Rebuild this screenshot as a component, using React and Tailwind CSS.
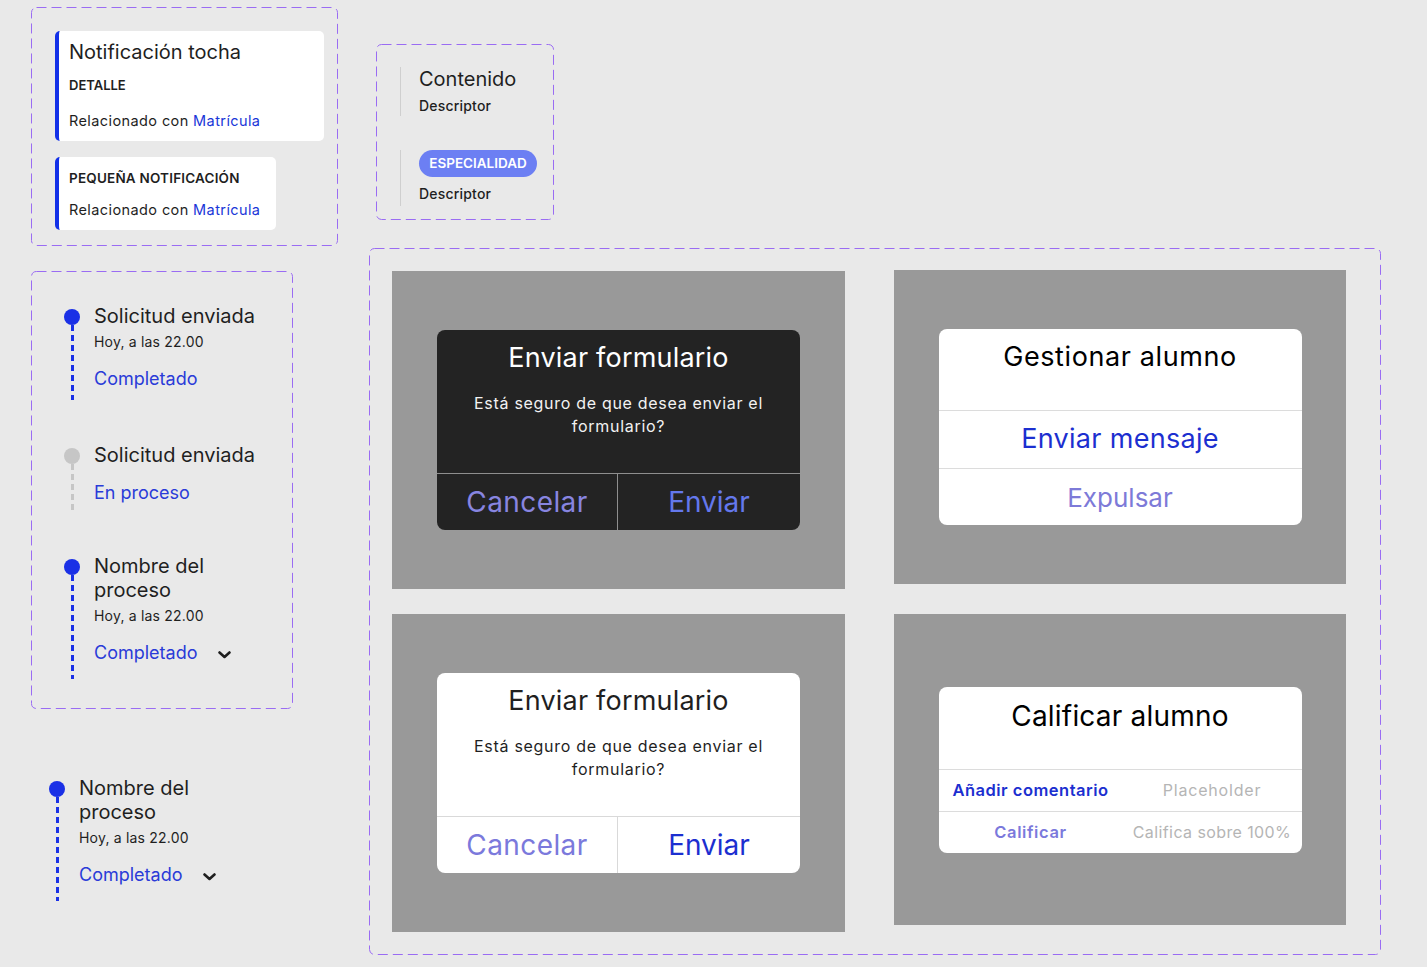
import React from "react";

function DashedBox({ className = "", children }) {
  return (
    <div className={"relative rounded-[5px] " + className}>
      <svg className="pointer-events-none absolute left-0 top-0 h-[calc(100%-1px)] w-[calc(100%-1px)] overflow-visible">
        <rect x="0.5" y="0.5" width="100%" height="100%" rx="5" fill="none" stroke="#9a6cf3" strokeWidth="1" strokeDasharray="10 5" />
      </svg>
      {children}
    </div>
  );
}

function Chevron() {
  return (
    <svg width="13" height="8" viewBox="0 0 13 8" className="ml-[21px] mt-[4px]">
      <polyline points="1.5,1.5 6.5,6 11.5,1.5" fill="none" stroke="#1f1f1f" strokeWidth="2.6" strokeLinecap="round" strokeLinejoin="round" />
    </svg>
  );
}

function BlueLine() {
  return <div className="w-[3px] flex-1 bg-[repeating-linear-gradient(to_bottom,#1a30e6_0px,#1a30e6_6px,transparent_6px,transparent_10px)]" />;
}
function GrayLine() {
  return <div className="w-[3px] flex-1 bg-[repeating-linear-gradient(to_bottom,#c6c6c6_0px,#c6c6c6_6px,transparent_6px,transparent_10px)]" />;
}

function ProcessItem({ className = "" }) {
  return (
    <div className={"flex gap-[14px] " + className}>
      <div className="flex w-[16px] flex-col items-center pt-[5px]">
        <div className="h-[16px] w-[16px] rounded-full bg-[#1a30e6]" />
        <BlueLine />
      </div>
      <div className="w-[150px] pb-[14px]">
        <div className="text-[20px] leading-[24px] text-[#1f1f1f]">Nombre del proceso</div>
        <div className="mt-[4px] text-[14px] leading-[20px] tracking-[0.2px] text-[#1f1f1f]">Hoy, a las 22.00</div>
        <div className="mt-[15px] flex items-center">
          <span className="text-[18px] leading-[24px] text-[#2a3bd8]">Completado</span>
          <Chevron />
        </div>
      </div>
    </div>
  );
}

function DarkDialog() {
  return (
    <div className="flex h-[200px] w-[363px] flex-col overflow-hidden rounded-[8px] bg-[#232323]">
      <div className="h-[143px] pt-[12px] text-center">
        <div className="text-[27px] leading-[32px] tracking-[0.2px] text-white">Enviar formulario</div>
        <div className="mt-[18px] text-[16px] leading-[23px] tracking-[0.7px] text-[#f2f2f2]">
          Está seguro de que desea enviar el<br />formulario?
        </div>
      </div>
      <div className="flex flex-1 border-t border-[#8e8e8e]">
        <div className="flex w-[181px] items-center justify-center border-r border-[#8e8e8e] text-[28px] tracking-[0.4px] text-[#8885e0]">Cancelar</div>
        <div className="flex flex-1 items-center justify-center text-[28px] text-[#6478ec]">Enviar</div>
      </div>
    </div>
  );
}

function LightDialog() {
  return (
    <div className="flex h-[200px] w-[363px] flex-col overflow-hidden rounded-[8px] bg-white">
      <div className="h-[143px] pt-[12px] text-center">
        <div className="text-[27px] leading-[32px] tracking-[0.2px] text-[#1f1f1f]">Enviar formulario</div>
        <div className="mt-[18px] text-[16px] leading-[23px] tracking-[0.7px] text-[#1f1f1f]">
          Está seguro de que desea enviar el<br />formulario?
        </div>
      </div>
      <div className="flex flex-1 border-t border-[#d9d9d9]">
        <div className="flex w-[181px] items-center justify-center border-r border-[#d9d9d9] text-[28px] tracking-[0.4px] text-[#7b79dc]">Cancelar</div>
        <div className="flex flex-1 items-center justify-center text-[28px] text-[#1c2fd0]">Enviar</div>
      </div>
    </div>
  );
}

function ManageDialog() {
  return (
    <div className="flex h-[196px] w-[363px] flex-col overflow-hidden rounded-[8px] bg-white">
      <div className="h-[81px] pt-[12px] text-center text-[27px] leading-[32px] tracking-[0.6px] text-black">Gestionar alumno</div>
      <div className="flex h-[58px] items-center justify-center border-t border-[#dcdcdc] text-[27px] tracking-[0.3px] text-[#1c2fd0]">Enviar mensaje</div>
      <div className="flex flex-1 items-center justify-center border-t border-[#dcdcdc] text-[26px] text-[#7d7ad8]">Expulsar</div>
    </div>
  );
}

function GradeDialog() {
  return (
    <div className="flex h-[166px] w-[363px] flex-col overflow-hidden rounded-[8px] bg-white">
      <div className="h-[82px] pt-[12px] text-center text-[28px] leading-[34px] tracking-[0.2px] text-black">Calificar alumno</div>
      <div className="grid h-[42px] grid-cols-[184px_1fr] items-center border-t border-[#dcdcdc] text-center text-[16px]">
        <span className="text-[16.5px] font-semibold tracking-[0.5px] text-[#1c2fd0]">Añadir comentario</span>
        <span className="tracking-[0.8px] text-[#b5b5b5]">Placeholder</span>
      </div>
      <div className="grid flex-1 grid-cols-[184px_1fr] items-center border-t border-[#dcdcdc] text-center text-[16px]">
        <span className="text-[16.5px] font-semibold tracking-[0.6px] text-[#7b79dc]">Calificar</span>
        <span className="tracking-[0.4px] text-[#b5b5b5]">Califica sobre 100%</span>
      </div>
    </div>
  );
}

export default function App() {
  return (
    <div className="flex min-h-[967px] w-[1427px] bg-[#e9e9e9] pl-[31px] pt-[7px] font-[Inter,sans-serif] text-[#1f1f1f]">
      {/* Left column */}
      <div className="flex w-[307px] flex-col">
        <DashedBox className="h-[239px] w-[307px] px-[24px] pt-[24px]">
          <div className="w-[269px] rounded-[5px] border-l-4 border-[#1230e8] bg-white pb-[10px] pl-[10px] pt-[9px]">
            <div className="text-[20px] leading-[24px]">Notificación tocha</div>
            <div className="mt-[12px] text-[13px] font-semibold leading-[18px]">DETALLE</div>
            <div className="mt-[17px] text-[14.5px] leading-[20px] tracking-[0.4px]">
              Relacionado con <span className="text-[#1a36d8]">Matrícula</span>
            </div>
          </div>
          <div className="mt-[16px] w-[221px] rounded-[5px] border-l-4 border-[#1230e8] bg-white pb-[10px] pl-[10px] pt-[11px]">
            <div className="text-[13.5px] font-semibold leading-[20px] tracking-[0.2px]">PEQUEÑA NOTIFICACIÓN</div>
            <div className="mt-[12px] text-[14.5px] leading-[20px] tracking-[0.4px]">
              Relacionado con <span className="text-[#1a36d8]">Matrícula</span>
            </div>
          </div>
        </DashedBox>

        <DashedBox className="mt-[25px] h-[438px] w-[262px] pl-[33px] pt-[33px]">
          <div className="flex gap-[14px]">
            <div className="flex w-[16px] flex-col items-center pt-[5px]">
              <div className="h-[16px] w-[16px] rounded-full bg-[#1a30e6]" />
              <BlueLine />
            </div>
            <div className="pb-[9px]">
              <div className="text-[20px] leading-[24px]">Solicitud enviada</div>
              <div className="mt-[4px] text-[14px] leading-[20px] tracking-[0.2px]">Hoy, a las 22.00</div>
              <div className="mt-[15px] text-[18px] leading-[24px] text-[#2a3bd8]">Completado</div>
            </div>
          </div>
          <div className="mt-[43px] flex gap-[14px]">
            <div className="flex w-[16px] flex-col items-center pt-[5px]">
              <div className="h-[16px] w-[16px] rounded-full bg-[#c6c6c6]" />
              <GrayLine />
            </div>
            <div className="pb-[8px]">
              <div className="text-[20px] leading-[24px]">Solicitud enviada</div>
              <div className="mt-[14px] text-[18px] leading-[24px] text-[#2a3bd8]">En proceso</div>
            </div>
          </div>
          <ProcessItem className="mt-[41px]" />
        </DashedBox>

        <ProcessItem className="ml-[18px] mt-[67px]" />
      </div>

      {/* Right column */}
      <div className="ml-[31px] flex flex-col">
        <DashedBox className="ml-[7px] mt-[37px] h-[176px] w-[178px] pl-[24px] pt-[23px]">
          <div className="flex gap-[18px]">
            <div className="w-px bg-[#cfcfcf]" />
            <div>
              <div className="text-[20px] leading-[24px]">Contenido</div>
              <div className="mt-[5px] text-[14px] font-medium leading-[20px] tracking-[0.2px]">Descriptor</div>
            </div>
          </div>
          <div className="mt-[34px] flex gap-[18px]">
            <div className="w-px bg-[#cfcfcf]" />
            <div className="pb-[2px]">
              <div className="flex h-[27px] w-[118px] items-center justify-center rounded-full bg-[#6c7ff3] text-[13.5px] font-semibold text-white">ESPECIALIDAD</div>
              <div className="mt-[7px] text-[14px] font-medium leading-[20px] tracking-[0.2px]">Descriptor</div>
            </div>
          </div>
        </DashedBox>

        <DashedBox className="mt-[28px] h-[707px] w-[1012px] p-[23px]">
          <div className="flex items-start gap-[49px]">
            <div className="flex h-[318px] w-[453px] items-center justify-center bg-[#999999]">
              <DarkDialog />
            </div>
            <div className="-mt-px flex h-[314px] w-[452px] items-center justify-center bg-[#999999]">
              <ManageDialog />
            </div>
          </div>
          <div className="mt-[25px] flex items-start gap-[49px]">
            <div className="flex h-[318px] w-[453px] items-center justify-center bg-[#999999]">
              <LightDialog />
            </div>
            <div className="flex h-[311px] w-[452px] items-center justify-center bg-[#999999]">
              <GradeDialog />
            </div>
          </div>
        </DashedBox>
      </div>
    </div>
  );
}
